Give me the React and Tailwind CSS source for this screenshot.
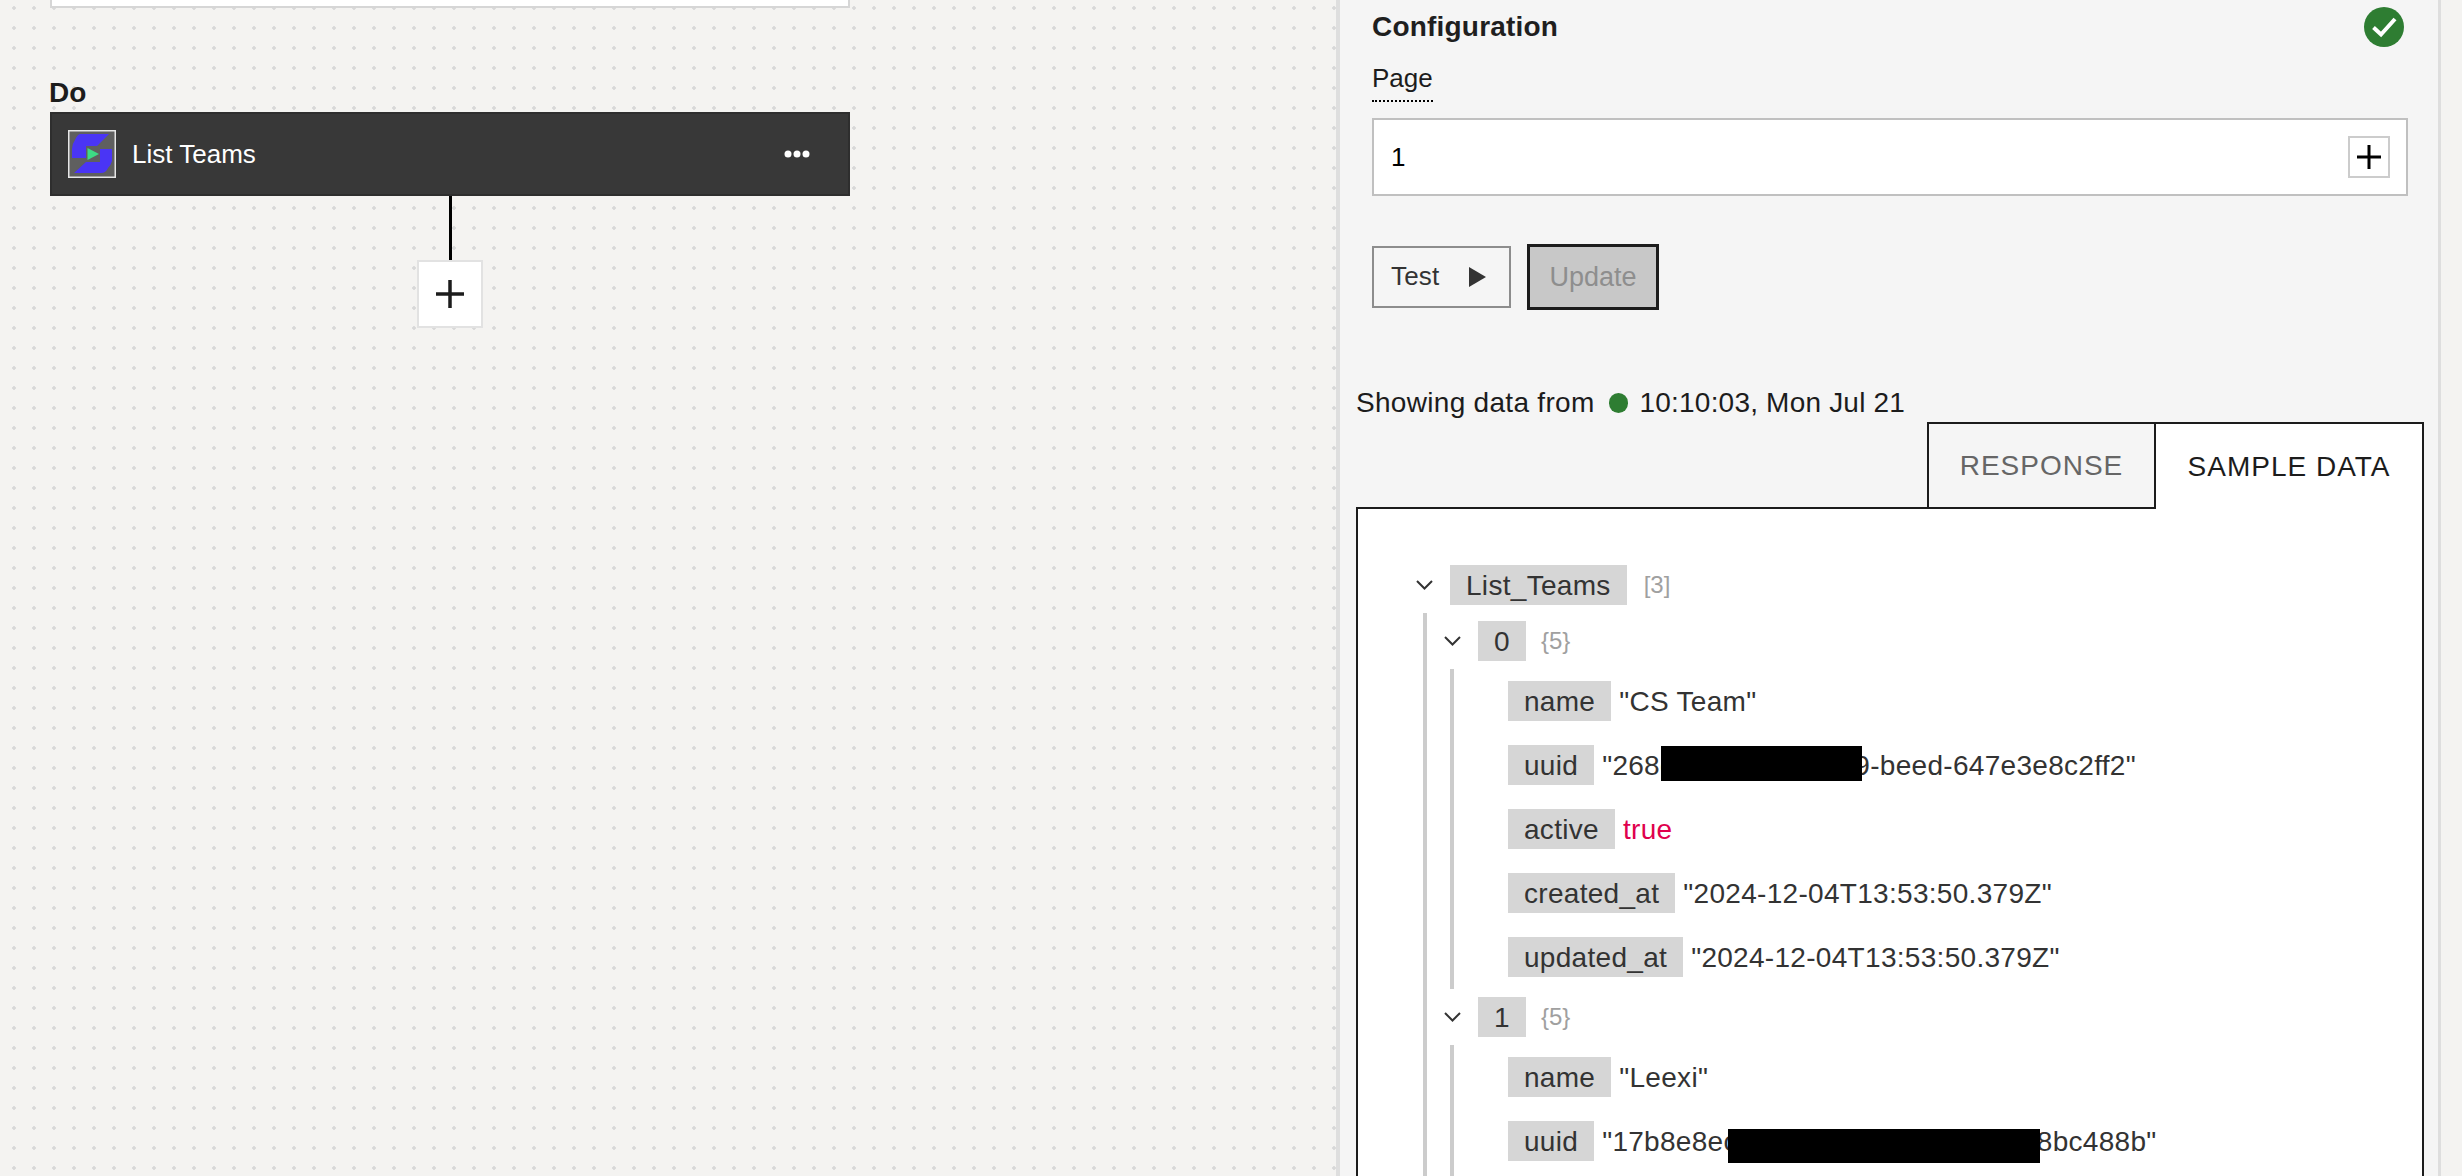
import React from "react";

function Chevron() {
  return (
    <svg width="17" height="10" viewBox="0 0 17 10" className="shrink-0">
      <path d="M1 1l7.5 7.5L16 1" fill="none" stroke="#333333" strokeWidth="2" />
    </svg>
  );
}

function Chip({ children }) {
  return (
    <span className="flex h-[40px] shrink-0 items-center bg-[#d6d6d6] px-[16px] pt-[1px] text-[28px] tracking-[0.3px] text-[#333333]">
      {children}
    </span>
  );
}

function Head({ label, count, gap }) {
  return (
    <div className="flex h-[40px] items-center">
      <Chevron />
      <span className="ml-[17px]">
        <Chip>{label}</Chip>
      </span>
      <span className={`text-[24px] text-[#a0a0a0] ${gap}`}>{count}</span>
    </div>
  );
}

function Leaf({ name, children, valueClass = "text-[#333333]" }) {
  return (
    <div className="flex h-[40px] items-center">
      <Chip>{name}</Chip>
      <span className={`ml-[8px] flex h-[40px] items-center whitespace-nowrap pt-[1px] text-[28px] tracking-[0.3px] ${valueClass}`}>
        {children}
      </span>
    </div>
  );
}

function Redaction({ className }) {
  return <span className={`relative z-10 inline-block shrink-0 self-start bg-black ${className}`} />;
}

function Logo() {
  return (
    <svg width="48" height="48" viewBox="0 0 48 48" className="shrink-0">
      <rect x="0.75" y="0.75" width="46.5" height="46.5" fill="#5f5f5f" stroke="#e6e6e6" strokeWidth="1.5" />
      <path d="M12 4H41L29 16H18V28H4V19Q4 14 7 10Q9 5 12 4Z" fill="#4a35f5" />
      <path d="M44 19V31Q43 35 40 38Q38 43 33 43H6L18 32H32V19Z" fill="#4a35f5" />
      <path d="M19.5 18L31 24L19.5 30Z" fill="#3ddc84" />
    </svg>
  );
}

export default function App() {
  return (
    <div className="flex h-screen w-full overflow-hidden bg-[#f4f3f1] font-['Liberation_Sans',Arial,sans-serif] text-[#1c1c1c]">
      <div className="flex w-[1336px] shrink-0 flex-col bg-[radial-gradient(circle,#d8d8d8_1.5px,transparent_2px)] bg-[length:20px_20px] bg-[position:4px_18px] pl-[50px]">
        <div className="h-[8px] w-[800px] border-x-2 border-b-2 border-[#d6d6d6] bg-white" />
        <div className="-ml-[1px] mt-[66px] h-[38px] text-[28px] font-bold leading-[38px] text-[#1c1c1c]">Do</div>
        <div className="flex h-[84px] w-[800px] items-center border-2 border-[#2e2e2e] bg-[#383838] pl-[16px] pr-[38px] text-white">
          <Logo />
          <span className="ml-[16px] text-[26px]">List Teams</span>
          <svg width="26" height="8" viewBox="0 0 26 8" className="ml-auto">
            <circle cx="4" cy="4" r="3.5" fill="#ffffff" />
            <circle cx="13" cy="4" r="3.5" fill="#ffffff" />
            <circle cx="22" cy="4" r="3.5" fill="#ffffff" />
          </svg>
        </div>
        <div className="flex w-[800px] flex-col items-center">
          <div className="h-[64px] w-[3px] bg-black" />
          <button className="flex h-[68px] w-[66px] items-center justify-center border-2 border-[#e2e2e2] bg-white">
            <svg width="28" height="28" viewBox="0 0 28 28">
              <path d="M14 0v28M0 14h28" stroke="#1c1c1c" strokeWidth="3.5" />
            </svg>
          </button>
        </div>
      </div>

      <div className="flex h-full w-[1105px] shrink-0 flex-col overflow-hidden border-l-4 border-r-[3px] border-[#dedede] bg-[#f5f5f5]">
        <div className="flex flex-col pl-[32px] pr-[30px]">
          <div className="flex h-[54px] items-center justify-between pr-[4px]">
            <span className="text-[28px] font-bold tracking-[0.2px] text-[#1f1f1f]">Configuration</span>
            <svg width="40" height="40" viewBox="0 0 40 40">
              <circle cx="20" cy="20" r="20" fill="#2e7d32" />
              <path d="M9.5 20.5l7.5 7L31 12" fill="none" stroke="#ffffff" strokeWidth="4" />
            </svg>
          </div>
          <div className="mt-[6px] self-start border-b-2 border-dotted border-black pb-[4px] text-[26px] leading-[36px]">
            Page
          </div>
          <div className="mt-[16px] flex h-[78px] items-center justify-between border-2 border-[#c0c0c0] bg-white pl-[17px] pr-[16px] text-[26px] text-black">
            <span>1</span>
            <button className="flex h-[42px] w-[42px] items-center justify-center border-2 border-[#cccccc] bg-white">
              <svg width="24" height="24" viewBox="0 0 24 24">
                <path d="M12 0v24M0 12h24" stroke="#000000" strokeWidth="3" />
              </svg>
            </button>
          </div>
          <div className="mt-[48px] flex h-[66px] items-center gap-[16px]">
            <button className="flex h-[62px] w-[139px] items-center border-2 border-[#8d8d8d] pl-[17px] text-[26px] tracking-[0.2px] text-[#333333]">
              <span className="-translate-y-[1px]">Test</span>
              <svg width="17" height="20" viewBox="0 0 17 20" className="ml-[30px]">
                <path d="M0 0L17 10L0 20Z" fill="#333333" />
              </svg>
            </button>
            <button className="flex h-[66px] w-[132px] items-center justify-center border-[3px] border-[#1c1c1c] bg-[#c8c8c8] text-[27px] text-[#8e8e8e]">
              Update
            </button>
          </div>
        </div>

        <div className="mt-[74px] flex h-[36px] items-center pl-[16px] pt-[1px] text-[28px] tracking-[0.3px] text-[#1c1c1c]">
          <span>Showing data from</span>
          <span className="ml-[14px] h-[20px] w-[19px] rounded-full bg-[#2e7d32]" />
          <span className="ml-[12px] tracking-[0.2px]">10:10:03, Mon Jul 21</span>
        </div>

        <div className="ml-[16px] mt-[2px] flex h-[87px] w-[1068px] shrink-0">
          <div className="flex-1 border-b-2 border-[#1c1c1c]" />
          <div className="flex w-[229px] items-center justify-center border-2 border-[#1c1c1c] text-[28px] tracking-[1px] text-[#666666]">
            RESPONSE
          </div>
          <div className="flex w-[268px] items-center justify-center border-r-2 border-t-2 border-[#1c1c1c] bg-white text-[28px] tracking-[1px] text-[#1c1c1c]">
            SAMPLE DATA
          </div>
        </div>

        <div className="ml-[16px] w-[1068px] flex-1 border-x-2 border-[#1c1c1c] bg-white pl-[58px] pt-[56px]">
          <Head label="List_Teams" count="[3]" gap="ml-[17px]" />
          <div className="ml-[7px] mt-[8px] border-l-4 border-[#cccccc] pb-[24px] pl-[17px] pt-[8px]">
            <Head label="0" count="{5}" gap="ml-[15px]" />
            <div className="ml-[6px] mt-[8px] flex flex-col gap-[24px] border-l-4 border-[#cccccc] py-[12px] pl-[54px]">
              <Leaf name="name">"CS Team"</Leaf>
              <Leaf name="uuid">
                <span>"268c</span>
                <Redaction className="ml-[-13px] mr-[-8px] h-[35px] w-[201px]" />
                <span>9-beed-647e3e8c2ff2"</span>
              </Leaf>
              <Leaf name="active" valueClass="text-[#e0004d]">true</Leaf>
              <Leaf name="created_at">"2024-12-04T13:53:50.379Z"</Leaf>
              <Leaf name="updated_at">"2024-12-04T13:53:50.379Z"</Leaf>
            </div>
            <div className="mt-[8px]">
              <Head label="1" count="{5}" gap="ml-[15px]" />
            </div>
            <div className="ml-[6px] mt-[8px] flex flex-col gap-[24px] border-l-4 border-[#cccccc] pb-[24px] pl-[54px] pt-[12px]">
              <Leaf name="name">"Leexi"</Leaf>
              <Leaf name="uuid">
                <span>"17b8e8ec</span>
                <Redaction className="ml-[-10px] mr-[-3px] mt-[7px] h-[34px] w-[312px]" />
                <span>8bc488b"</span>
              </Leaf>
            </div>
          </div>
        </div>
      </div>
    </div>
  );
}
